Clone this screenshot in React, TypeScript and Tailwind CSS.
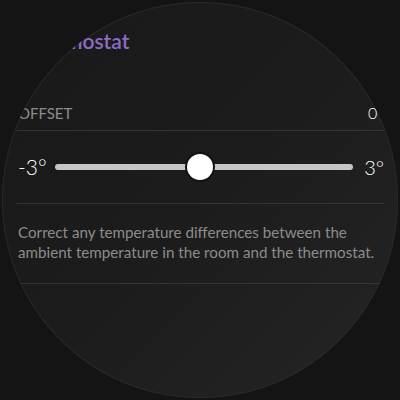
import React from "react";

export default function App() {
  return (
    <div className="w-[400px] h-[400px] bg-[#141415] relative overflow-hidden" style={{ fontFamily: "Lato, 'Open Sans', sans-serif" }}>
      <div className="absolute left-[2px] top-[2px] w-[396px] h-[396px] rounded-full overflow-hidden bg-gradient-to-br from-[#19191a] via-[#1c1c1d] to-[#252526] shadow-[inset_0_0_0_1px_#29292a]">
        <div className="pt-[26px] pl-[20px] text-[21px] leading-[26px] font-semibold text-[#8b6cc8]">Thermostat</div>
        <div className="mx-[14px] mt-[49px]">
          <div className="flex justify-between items-center pl-[2px] pb-[7px] text-[15px] leading-[20px]">
            <span className="text-[#8c8c8c]">OFFSET</span>
            <span className="text-white text-[16px] font-light">0°</span>
          </div>
          <div className="h-px bg-[#353536]" />
          <div className="h-[72px] flex items-center pl-[2px]">
            <span className="shrink-0 text-white text-[21px] font-light w-[24px]">-3°</span>
            <div className="flex-1 ml-[13px] mr-[11px] h-[6px] rounded-full bg-[#c6c6c6] relative">
              <div className="absolute left-[145px] top-1/2 -translate-x-1/2 -translate-y-1/2 w-[26px] h-[26px] rounded-full bg-white shadow-[0_0_0_2px_#111]" />
            </div>
            <span className="shrink-0 text-white text-[20px] font-light">3°</span>
          </div>
          <div className="h-px bg-[#353536]" />
          <div className="pt-[18px] pb-[21px] pl-[2px] text-[15.2px] leading-[20px] text-[#8c8c8c]">
            Correct any temperature differences between the ambient temperature in the room and the thermostat.
          </div>
          <div className="h-px bg-[#353536]" />
        </div>
      </div>
    </div>
  );
}
